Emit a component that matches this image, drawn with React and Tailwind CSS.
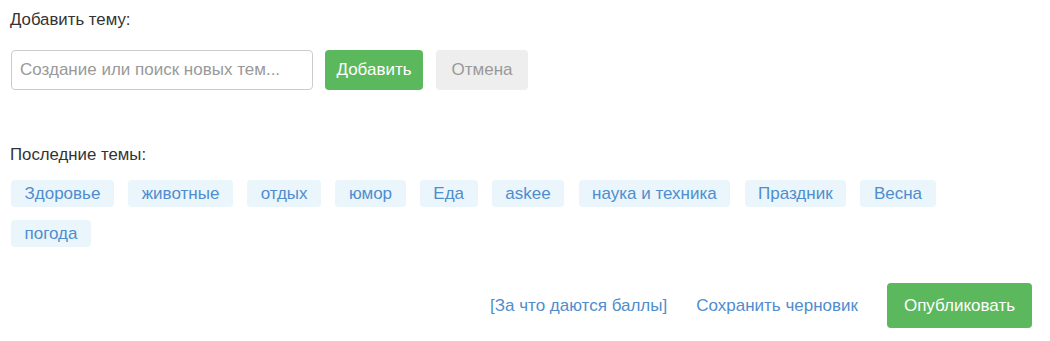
import React from "react";

const recentTopics = [
  "Здоровье",
  "животные",
  "отдых",
  "юмор",
  "Еда",
  "askee",
  "наука и техника",
  "Праздник",
  "Весна",
  "погода",
];

export default function App() {
  return (
    <div
      className="bg-white w-[1050px] h-[341px] px-[10px] pt-[10px] text-[#333]"
      style={{ fontFamily: '"Liberation Sans", Arial, sans-serif' }}
    >
      {/* Add topic */}
      <div className="text-[16.8px] leading-[20px]">Добавить тему:</div>
      <div className="flex items-center mt-[20px] ml-px">
        <input
          type="text"
          placeholder="Создание или поиск новых тем..."
          className="w-[302px] h-[40px] px-[8px] border border-[#ccc] rounded-[4px] text-[17px] text-[#555] placeholder:text-[#999] outline-none"
        />
        <button className="ml-[12px] h-[40px] w-[98px] rounded-[4px] bg-[#5cb85c] text-white text-[17px]">
          Добавить
        </button>
        <button className="ml-[13px] h-[40px] w-[92px] rounded-[4px] bg-[#eee] text-[#999] text-[17px]">
          Отмена
        </button>
      </div>

      {/* Recent topics */}
      <div className="mt-[55px] text-[16.8px] leading-[20px]">Последние темы:</div>
      <div className="mt-[15px] ml-px flex flex-wrap gap-x-[14.3px] gap-y-[13px] max-w-[960px]">
        {recentTopics.map((topic) => (
          <span
            key={topic}
            className="h-[27px] px-[13.5px] flex items-center rounded-[4px] bg-[#eaf6fb] text-[#4f8dcf] text-[17px]"
          >
            {topic}
          </span>
        ))}
      </div>

      {/* Footer actions */}
      <div className="mt-[36px] flex items-center justify-end pr-[8px] text-[17px]">
        <a className="text-[#4f8dcf] cursor-pointer">[За что даются баллы]</a>
        <a className="ml-[29px] text-[#4f8dcf] cursor-pointer">Сохранить черновик</a>
        <button className="ml-[29px] h-[45px] w-[145px] rounded-[4px] bg-[#5cb85c] text-white text-[17px]">
          Опубликовать
        </button>
      </div>
    </div>
  );
}
